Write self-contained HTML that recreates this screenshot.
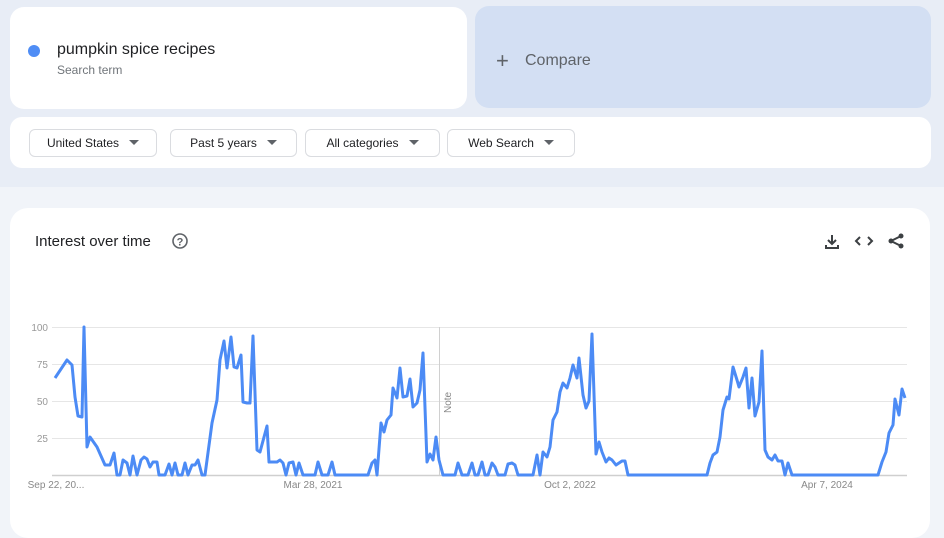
<!DOCTYPE html>
<html><head><meta charset="utf-8"><style>
*{margin:0;padding:0;box-sizing:border-box}
body{width:944px;height:524px;overflow:hidden;background:#f1f4f9;font-family:"Liberation Sans",Arial,sans-serif;position:relative}
.top{position:absolute;left:0;top:0;width:944px;height:187px;background:#e8edf6}
.card{position:absolute;background:#fff}
.btn{position:absolute;top:129px;height:28px;border:1px solid #dadce0;border-radius:6px;background:#fff;font-size:12px;color:#202124;line-height:26px;text-align:center}
.btn i{display:inline-block;width:0;height:0;border-left:5px solid transparent;border-right:5px solid transparent;border-top:5px solid #5f6368;margin-left:10px;vertical-align:2px}
</style></head><body>
<div class="top"></div>
<div class="card" style="left:10px;top:7px;width:457px;height:102px;border-radius:14px"></div>
<div style="position:absolute;left:28px;top:45px;width:12px;height:12px;border-radius:50%;background:#4f8df5"></div>
<div style="position:absolute;left:57px;top:41px;font-size:16px;color:#202124">pumpkin spice recipes</div>
<div style="position:absolute;left:57px;top:63px;font-size:12px;color:#70757a">Search term</div>
<div style="position:absolute;left:475px;top:6px;width:456px;height:102px;border-radius:14px;background:#d3dff3"></div>
<div style="position:absolute;left:496px;top:48px;font-size:22px;color:#5f6368;font-weight:300">+</div>
<div style="position:absolute;left:525px;top:52px;font-size:16px;color:#5f6368">Compare</div>
<div class="card" style="left:10px;top:117px;width:921px;height:51px;border-radius:12px"></div>
<div class="btn" style="left:29px;width:128px">United States<i></i></div>
<div class="btn" style="left:170px;width:127px">Past 5 years<i></i></div>
<div class="btn" style="left:305px;width:135px">All categories<i></i></div>
<div class="btn" style="left:447px;width:128px">Web Search<i></i></div>
<div class="card" style="left:10px;top:208px;width:920px;height:330px;border-radius:18px"></div>
<div style="position:absolute;left:35px;top:233px;font-size:15px;color:#202124">Interest over time</div>
<svg style="position:absolute;left:0;top:0" width="944" height="524">
<circle cx="180" cy="241" r="7" fill="none" stroke="#5f6368" stroke-width="1.6"/>
<text x="180" y="245.5" font-size="11" font-weight="bold" fill="#5f6368" text-anchor="middle" font-family="Liberation Sans">?</text>
<g stroke="#3c4043" stroke-width="2" fill="none">
<path d="M832 235v9M828 240l4 4 4-4M826 245v3h12v-3"/>
<path d="M860 237l-4 4 4 4M868 237l4 4-4 4"/>
<path d="M901 236l-10 5 10 5"/>
</g>
<g fill="#3c4043"><circle cx="901" cy="236" r="2.5"/><circle cx="891" cy="241" r="2.5"/><circle cx="901" cy="246" r="2.5"/></g>
<g stroke="#e6e6e6" stroke-width="1"><line x1="52" y1="327.5" x2="907" y2="327.5"/><line x1="52" y1="364.5" x2="907" y2="364.5"/><line x1="52" y1="401.5" x2="907" y2="401.5"/><line x1="52" y1="438.5" x2="907" y2="438.5"/></g>
<line x1="439.5" y1="327" x2="439.5" y2="475" stroke="#d0d0d0"/>
<line x1="52" y1="475.5" x2="907" y2="475.5" stroke="#cfcfcf" stroke-width="1.5"/>
<g font-size="10" fill="#999" font-family="Liberation Sans" text-anchor="end">
<text x="48" y="331">100</text><text x="48" y="368">75</text><text x="48" y="405">50</text><text x="48" y="442">25</text></g>
<text transform="translate(451,413) rotate(-90)" font-size="10" fill="#888" font-family="Liberation Sans">Note</text>
<g font-size="10" fill="#888" font-family="Liberation Sans" text-anchor="middle">
<text x="56" y="488">Sep 22, 20...</text><text x="313" y="488">Mar 28, 2021</text><text x="570" y="488">Oct 2, 2022</text><text x="827" y="488">Apr 7, 2024</text></g>
<polyline fill="none" stroke="#4c8bf5" stroke-width="3" stroke-linejoin="round" points="55,378 67,360 72,365 75,397 78,416 82,417 84,327 87,447 90,437 97,447 105,465 110,465 114,453 117,475 120,475 123,460 127,463 130,475 133,456 137,475 141,460 144,457 147,459 150,467 153,462 157,462 159,475 165,475 169,464 172,475 175,463 178,475 182,475 185,463 188,475 192,465 195,465 198,460 202,475 205,475 212,423 217,400 220,360 224,341 227,368 231,337 234,367 237,368 241,355 243,402 247,403 250,403 253,336 257,450 260,452 267,426 269,462 277,462 280,460 283,463 286,475 289,463 293,462 296,475 299,463 303,475 315,475 318,462 322,475 328,475 332,462 335,475 368,475 372,463 375,460 377,475 381,423 384,432 387,420 391,415 393,388 397,398 400,368 403,397 407,396 410,379 413,407 417,403 420,390 423,353 427,462 430,454 433,460 436,437 439,460 443,475 455,475 458,463 462,475 468,475 472,463 475,475 478,475 482,462 485,475 488,475 492,463 495,467 498,475 505,475 508,464 512,463 515,465 518,475 533,475 537,455 540,475 543,452 547,457 550,447 553,420 557,412 560,392 563,383 567,388 570,378 573,365 577,378 579,358 583,395 586,408 589,401 592,334 596,454 599,442 602,452 606,462 609,458 612,460 616,465 622,461 625,461 628,475 707,475 710,463 713,455 717,452 720,437 723,410 727,397 729,399 733,367 737,380 739,387 743,377 746,368 749,408 752,378 755,416 759,402 762,351 765,450 768,457 772,460 775,455 778,461 782,461 785,475 788,463 792,475 878,475 882,462 886,452 889,433 893,425 895,399 899,415 902,389 905,398"/>
</svg>
</body></html>
